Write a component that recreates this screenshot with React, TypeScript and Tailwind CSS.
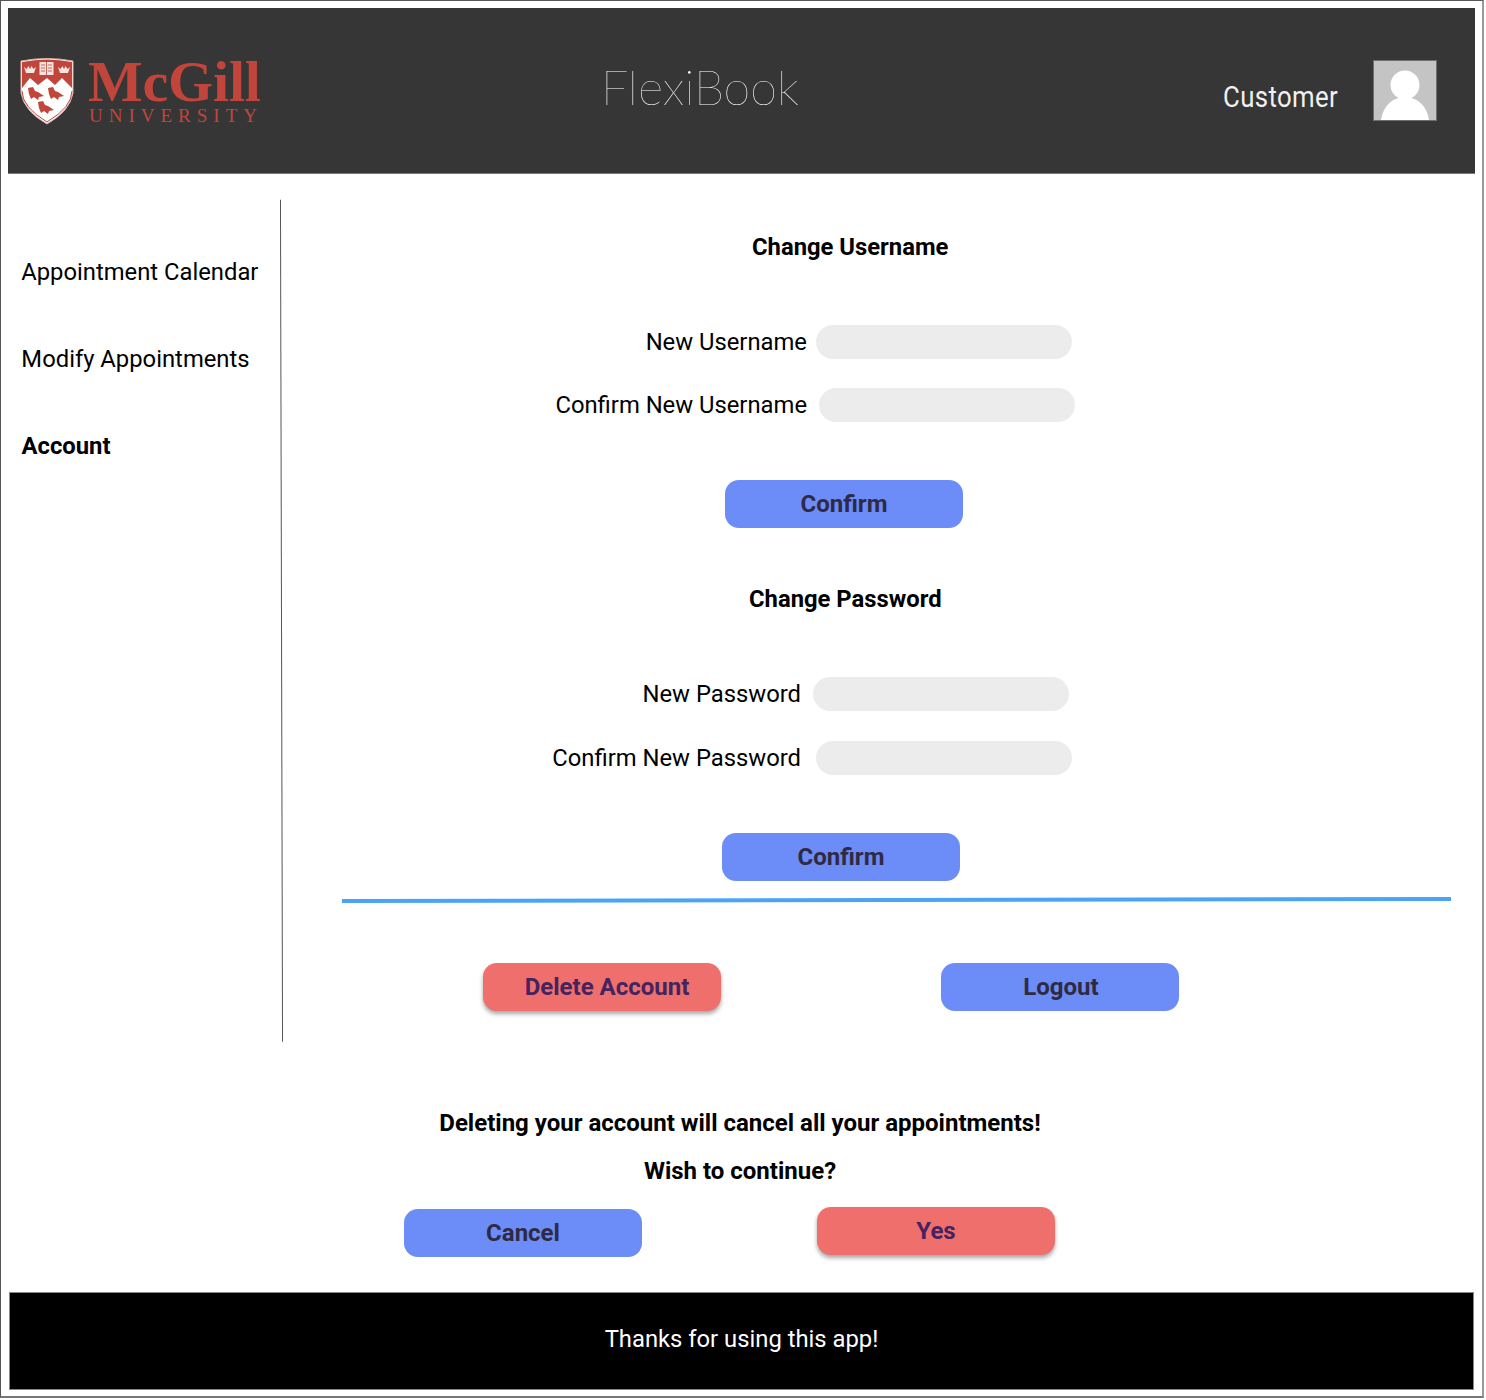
const SANS = "font-['Roboto',sans-serif]";

function Shield() {
  const bird = 'M0 1 L5 0 L7 4 L10 5 L16 9 L11 10 L10 13 L6 10 L3 12 L1 7 Z';
  const crown = 'M0 0 L2.5 2 L4.5 -1 L6 2 L7.5 -1 L9.5 2 L12 0 L10 6 L2 6 Z';
  return (
    <svg width="54" height="68" viewBox="0 0 54 68" className="shrink-0">
      <path d="M1 4 Q27 -1 53 4 L53 36 Q50 54 27 67 Q4 54 1 36 Z" fill="#ffffff" stroke="#d9b0ab" strokeWidth="1" />
      <path d="M2 5 Q27 0 52 5 L52 31 L42 21 L35 28 L27 21 L18 28 L10 21 L2 31 Z" fill="#c1453b" />
      <path d="M2 34 Q2 50 27 65 Q52 50 52 34" fill="none" stroke="#c1453b" strokeWidth="1" />
      <g fill="#f5e4e0">
        <path d={crown} transform="translate(4 10)" />
        <path d={crown} transform="translate(38 10)" />
        <rect x="19.5" y="5" width="14" height="13" />
      </g>
      <path d="M26.5 5 V18 M21 8 H25 M21 11 H25 M21 14 H25 M28 8 H32 M28 11 H32 M28 14 H32" stroke="#c1453b" strokeWidth="0.8" />
      <g fill="#c1453b">
        <path d={bird} transform="translate(8 30)" />
        <path d={bird} transform="translate(28 30)" />
        <path d={bird} transform="translate(18 44)" />
      </g>
    </svg>
  );
}

function Avatar() {
  return (
    <svg width="64" height="61" viewBox="0 0 64 61" className="shrink-0">
      <rect x="0.5" y="0.5" width="63" height="60" fill="#c4c4c4" stroke="#6f6f6f" />
      <circle cx="32" cy="25" r="14.5" fill="#ffffff" />
      <path d="M8 60 C10 46 20 37 32 37 C44 37 54 46 56 60 Z" fill="#ffffff" />
    </svg>
  );
}

function Field({ label, labelEnd, inputStart, top }: { label: string; labelEnd: number; inputStart: number; top: number }) {
  return (
    <div className="flex items-center h-[34px]" style={{ marginTop: top }}>
      <span className="text-right whitespace-nowrap text-[23.8px] text-black pt-[1px]" style={{ width: labelEnd }}>
        {label}
      </span>
      <span className="h-[34px] w-[256px] rounded-[17px] bg-[#ececec]" style={{ marginLeft: inputStart - labelEnd }} />
    </div>
  );
}

function Btn({ label, red, className }: { label: string; red?: boolean; className?: string }) {
  return (
    <button
      type="button"
      className={`h-[48px] w-[238px] rounded-[14px] text-[24px] font-bold flex items-center justify-center ${
        red
          ? 'bg-[#ef6f6c] text-[#45235f] shadow-[0_3px_4px_rgba(0,0,0,0.35)]'
          : 'bg-[#6c8cf7] text-[#2f2a44]'
      } ${className ?? ''}`}
    >
      {label}
    </button>
  );
}

export default function App() {
  return (
    <div className={`${SANS} bg-white w-[1484px] h-[1398px] border border-[#555] border-r-2 border-r-[#999] border-b-2 border-b-[#777] pt-[7px] pl-[7px] flex flex-col`}>
      {/* Header */}
      <header className="w-[1467px] h-[166px] bg-[#363636] border-b border-[#777] flex items-start shrink-0">
        <div className="flex mt-[49px] ml-[12px] w-[568px]">
          <Shield />
          <div className="ml-[14px] flex flex-col">
            <span className="font-['Liberation_Serif',serif] text-[#c1453b] text-[58px] leading-[50px] font-bold tracking-[-0.2px] whitespace-nowrap">
              McGill
            </span>
            <span className="font-['Liberation_Serif',serif] text-[#c1453b] text-[19px] leading-[18px] tracking-[6px] whitespace-nowrap ml-[1px]">
              UNIVERSITY
            </span>
          </div>
        </div>
        <div className="mt-[48px] ml-[13px] w-[622px] font-['Lato',sans-serif] font-thin text-white text-[48.5px] leading-[60px]">
          FlexiBook
        </div>
        <div className="mt-[71px] w-[150px] text-[#f0f0f0] text-[29px] leading-[36px] tracking-[0.4px] whitespace-nowrap origin-left scale-x-[0.89]">
          Customer
        </div>
        <div className="mt-[52px]">
          <Avatar />
        </div>
      </header>

      {/* Body */}
      <div className="flex h-[868px] mt-[26px] -ml-[7px] shrink-0">
        <nav className="w-[281px] h-[842px] border-r border-[#555] -rotate-[0.14deg] pl-[21px] pt-[57px] text-[23.8px] text-black shrink-0">
          <div className="h-[30px] leading-[30px] rotate-[0.14deg]">Appointment Calendar</div>
          <div className="h-[30px] leading-[30px] mt-[57px] rotate-[0.14deg]">Modify Appointments</div>
          <div className="h-[30px] leading-[30px] mt-[57px] font-bold rotate-[0.14deg]">Account</div>
        </nav>

        <main className="flex-1 relative">
          <h2 className="mt-[32px] ml-[470px] text-[23.8px] leading-[30px] font-bold text-black whitespace-nowrap">Change Username</h2>
          <Field label="New Username" labelEnd={525} inputStart={534} top={63} />
          <Field label="Confirm New Username" labelEnd={525} inputStart={537} top={29} />
          <Btn label="Confirm" className="mt-[58px] ml-[443px]" />

          <h2 className="mt-[56px] ml-[467px] text-[23.8px] leading-[30px] font-bold text-black whitespace-nowrap">Change Password</h2>
          <Field label="New Password" labelEnd={519} inputStart={531} top={63} />
          <Field label="Confirm New Password" labelEnd={519} inputStart={534} top={30} />
          <Btn label="Confirm" className="mt-[58px] ml-[440px]" />

          <div className="mt-[17px] ml-[60px] w-[1109px] h-[4px] bg-[#4aa3f5] -rotate-[0.1deg]" />

          <div className="flex mt-[61px] ml-[201px] gap-[220px]">
            <Btn label="Delete Account" red className="pl-[10px]" />
            <Btn label="Logout" className="pl-[2px]" />
          </div>
        </main>
      </div>

      {/* Delete confirmation */}
      <div className="-ml-[7px] flex flex-col shrink-0 relative">
        <p className="mt-[40px] text-center w-[1478px] text-[24px] leading-[30px] font-bold text-black">
          Deleting your account will cancel all your appointments!
        </p>
        <p className="mt-[18px] text-center w-[1478px] text-[24px] leading-[30px] font-bold text-black">Wish to continue?</p>
        <div className="flex items-start mt-[21px] ml-[403px] gap-[175px]">
          <Btn label="Cancel" className="mt-[2px]" />
          <Btn label="Yes" red />
        </div>
      </div>

      {/* Footer */}
      <footer className="mt-[35px] ml-[1px] w-[1465px] h-[98px] bg-black border border-[#888] flex items-center justify-center pb-[3px] text-white text-[23.8px] shrink-0">
        Thanks for using this app!
      </footer>
    </div>
  );
}
